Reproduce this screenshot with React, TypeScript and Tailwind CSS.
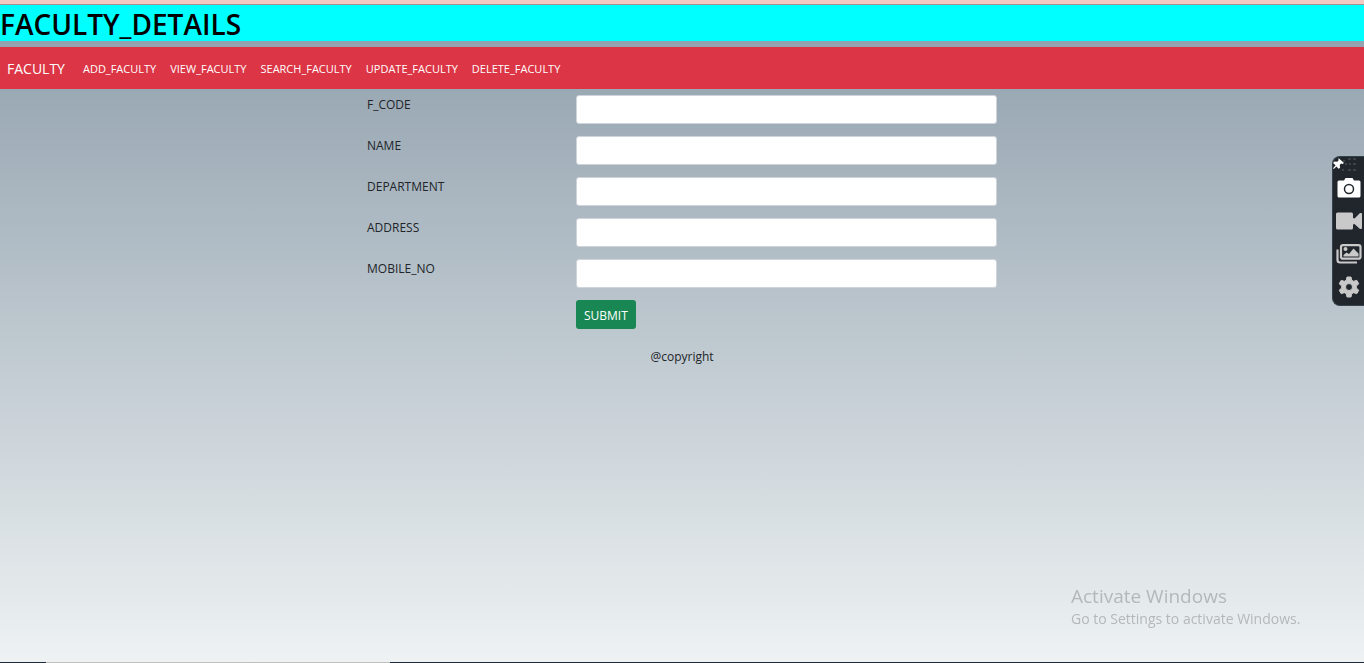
import type { ReactNode } from 'react';

const navLinks = ['ADD_FACULTY', 'VIEW_FACULTY', 'SEARCH_FACULTY', 'UPDATE_FACULTY', 'DELETE_FACULTY'];

const fields = [
  { id: 'f_code', label: 'F_CODE' },
  { id: 'name', label: 'NAME' },
  { id: 'department', label: 'DEPARTMENT' },
  { id: 'address', label: 'ADDRESS' },
  { id: 'mobile_no', label: 'MOBILE_NO' },
];

function ToolButton({ label, children }: { label: string; children: ReactNode }) {
  return (
    <button type="button" aria-label={label} className="flex h-6 w-full items-center justify-center">
      {children}
    </button>
  );
}

function CaptureToolbar() {
  return (
    <aside className="fixed top-[156px] right-0 flex h-[150px] w-8 flex-col rounded-l-lg border border-r-0 border-[#36424b] bg-[#20262b]">
      <svg viewBox="0 0 32 16" className="h-4 w-8 shrink-0" aria-hidden="true">
        <g fill="#3c4348">
          <path d="M10 3h2v2h-2zM15 1h3v2h-3zM20 1h3v2h-3zM12 6h2v2h-2zM16 6h2v2h-2zM20 6h3v2h-3zM9 12h2v2H9zM15 12h3v2h-3zM20 12h3v2h-3z" />
        </g>
        <path fill="#fff" d="M5.500 1l5.500 5-1.500 1-1.500-.4-1.200 1.400.2 3-1.500.8-2-2.400L.8 12l-.8-.8L2.600 8.200 0 6l1.400-1.500 2.800.2 1.300-1.200z" />
      </svg>
      <div className="flex flex-col gap-[9px] pt-[3px]">
        <ToolButton label="Take screenshot">
          <svg viewBox="0 0 24 20" className="h-5 w-6">
            <path fill="#fff" fillRule="evenodd" d="M8.500 0h7l1.500 2.500h5a1.500 1.500 0 0 1 1.500 1.500v14a1.500 1.500 0 0 1-1.500 1.500H2A1.500 1.500 0 0 1 .5 18V4A1.500 1.500 0 0 1 2 2.500h5z" />
            <circle cx="12" cy="11" r="4.500" fill="#fff" stroke="#20262b" strokeWidth="1.500" />
          </svg>
        </ToolButton>
        <ToolButton label="Record video">
          <svg viewBox="0 0 26 18" className="h-[18px] w-[26px]" fill="#c9c9c9">
            <path d="M1.500 .5h14A1.500 1.500 0 0 1 17 2v4l1.500 .5L24 1h1a1 1 0 0 1 1 1v14a1 1 0 0 1-1 1h-1l-5.500-5L17 12.500V16a1.500 1.500 0 0 1-1.500 1.500h-14A1.500 1.500 0 0 1 0 16V2A1.500 1.500 0 0 1 1.500 .5z" />
          </svg>
        </ToolButton>
        <ToolButton label="Gallery">
          <svg viewBox="0 0 26 20" className="h-5 w-[26px]">
            <path d="M1.500 5.500V16a2.500 2.500 0 0 0 2.500 2.500h17" fill="none" stroke="#c9c9c9" strokeWidth="2.200" />
            <rect x="5" y="1.200" width="19.500" height="13.500" rx="2" fill="#20262b" stroke="#c9c9c9" strokeWidth="2.200" />
            <circle cx="9.500" cy="5" r="2" fill="#c9c9c9" />
            <path d="M7.500 12.500v-1.500l3-2.500 2.500 1.500L17.500 4.500l5 5v3z" fill="#c9c9c9" />
          </svg>
        </ToolButton>
        <ToolButton label="Settings">
          <svg viewBox="0 0 22 22" className="h-[22px] w-[22px]" fill="#c9c9c9">
            <path
              fillRule="evenodd"
              stroke="#c9c9c9"
              strokeWidth="1"
              strokeLinejoin="round"
              d="M9 1h4l.7 3.200 2 1.100L18.800 4.300l2 3.500L18.300 10v2l2.500 2.200-2 3.500-3.100-1-2 1.100L13 21H9l-.7-3.200-2-1.100-3.100 1-2-3.500L3.700 12v-2L1.200 7.800l2-3.500 3.100 1 2-1.100zM11 7.500a3.500 3.500 0 1 0 0 7 3.500 3.500 0 0 0 0-7z"
            />
          </svg>
        </ToolButton>
      </div>
    </aside>
  );
}

export default function App() {
  return (
    <div className="flex min-h-screen flex-col bg-linear-to-b from-[#8e9eab] to-[#eef2f3] font-['Open_Sans','Noto_Sans',sans-serif] text-xs text-[#212529]">
      <div className="h-[5px] border-b border-[#a98f8f] bg-[#f2c9c3]" />
      <header className="mb-1.5 bg-[#00ffff] pt-0.5">
        <h1 className="text-[28px] leading-[34px] font-semibold text-black">FACULTY_DETAILS</h1>
      </header>

      <nav className="flex h-[42px] items-center bg-[#dc3545] pt-0.5 pl-[7px] text-white">
        <a href="#faculty" className="mr-[18px] text-sm">FACULTY</a>
        <ul className="flex gap-3.5 text-[11px]">
          {navLinks.map((link) => (
            <li key={link}>
              <a href={`#${link.toLowerCase()}`}>{link}</a>
            </li>
          ))}
        </ul>
      </nav>

      <main className="mx-auto w-full max-w-[630px] pt-1.5">
        <form className="flex flex-col gap-3" onSubmit={(e) => e.preventDefault()}>
          {fields.map(({ id, label }) => (
            <div key={id} className="grid grid-cols-[209px_1fr] items-start">
              <label htmlFor={id} className="leading-5">{label}</label>
              <input
                id={id}
                type="text"
                className="h-[29px] w-full rounded-[3px] border border-[#ced4da] bg-white px-2 outline-none"
              />
            </div>
          ))}
          <div className="grid grid-cols-[209px_1fr]">
            <button type="submit" className="col-start-2 h-[29px] justify-self-start rounded-[3px] bg-[#198754] px-2 pt-0.5 text-white">
              SUBMIT
            </button>
          </div>
        </form>
      </main>

      <footer className="mt-[19px] text-center leading-[18px]">@copyright</footer>

      <CaptureToolbar />

      <div className="pointer-events-none fixed right-[57px] bottom-[34px] w-[236px] whitespace-nowrap text-[#b4b8ba]">
        <p className="text-[19px] leading-[26px]">Activate Windows</p>
        <p className="text-sm leading-5">Go to Settings to activate Windows.</p>
      </div>

      <div className="fixed inset-x-0 bottom-0 flex h-px bg-[#1f2937]">
        <div className="ml-[46px] w-[344px] bg-[#bfbfbf]" />
      </div>
    </div>
  );
}
